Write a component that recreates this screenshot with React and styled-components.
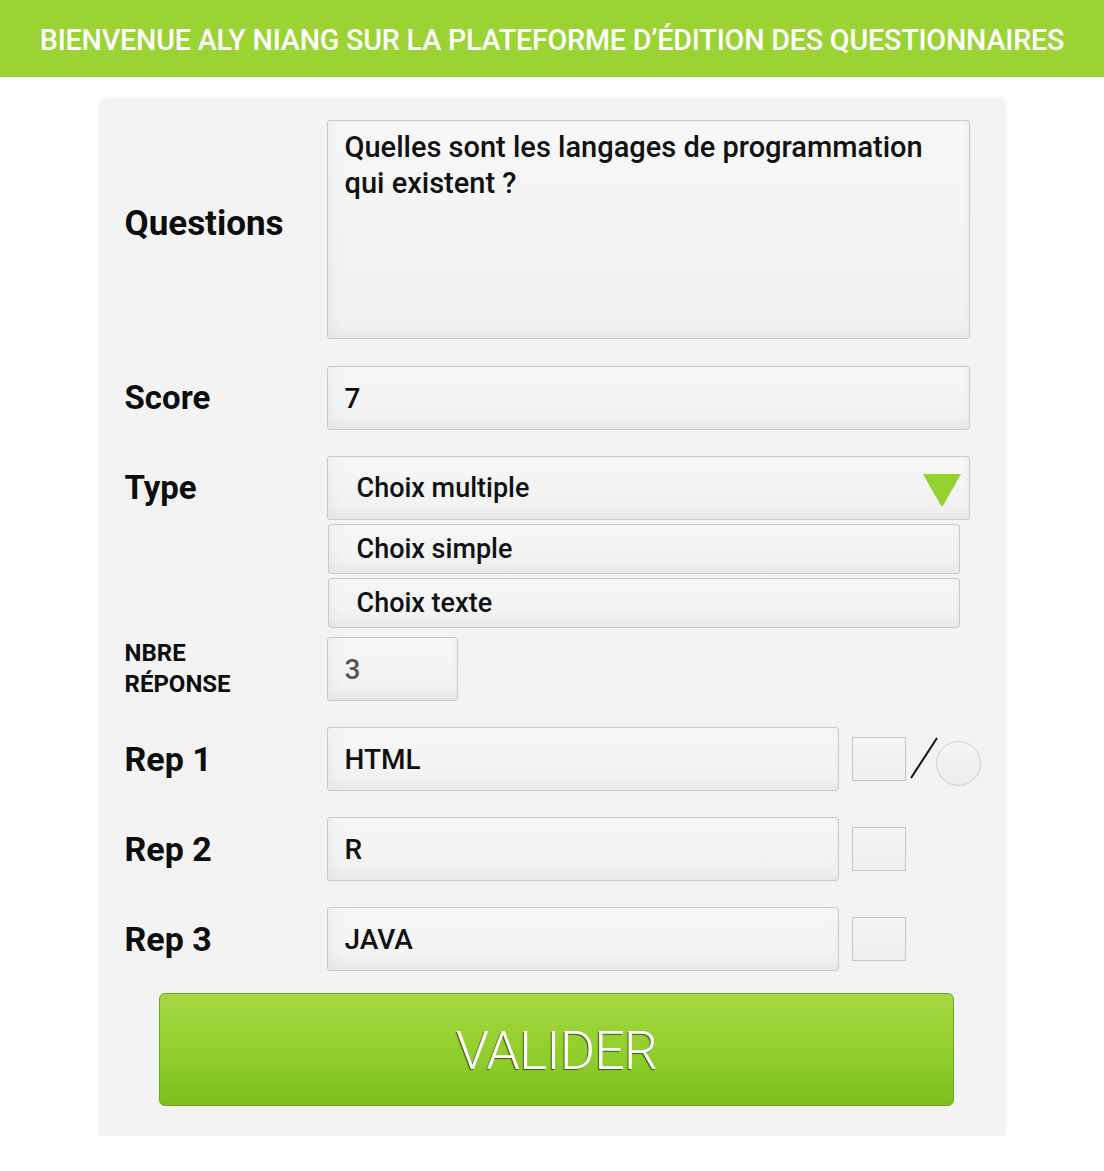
import React from 'react'
import styled, { createGlobalStyle } from 'styled-components'

const GlobalStyle = createGlobalStyle`
  body {
    margin: 0;
    background: #ffffff;
    font-family: Roboto, "Noto Sans", Arial, sans-serif;
    color: #111;
  }
`

const Header = styled.header`
  height: 77px;
  background: #9bd334;
  display: flex;
  align-items: center;
  justify-content: center;
`

const HeaderTitle = styled.h1`
  margin: 2px 0 0;
  color: #fff;
  font-size: 28.7px;
  font-weight: 500;
  letter-spacing: -0.2px;
  text-transform: uppercase;
`

const Card = styled.form`
  width: 903px;
  margin: 22px auto 0;
  box-sizing: border-box;
  background: #f3f3f3;
  border-radius: 4px;
  box-shadow: 0 1px 6px rgba(0, 0, 0, 0.12);
  padding: 21px 24px 30px;
  display: flex;
  flex-direction: column;
`

const Row = styled.div`
  display: grid;
  grid-template-columns: 202px 1fr;
  align-items: ${p => (p.$top ? 'start' : 'center')};
  margin-bottom: ${p => p.$gap ?? 26}px;
`

const Label = styled.label`
  font-size: ${p => (p.$small ? 24 : p.$size || 33)}px;
  font-weight: 700;
  line-height: ${p => (p.$small ? '31px' : '64px')};
  color: #0d0d0d;
  text-transform: ${p => (p.$small ? 'uppercase' : 'none')};
  margin-top: ${p => p.$shift || 0}px;
`

const Box = styled.div`
  box-sizing: border-box;
  width: ${p => p.$w || '643px'};
  height: ${p => p.$h || '64px'};
  border: 1px solid #c9c9c9;
  border-radius: 3px;
  background: linear-gradient(#f7f7f7, #f1f1f1);
  box-shadow: inset 0 -8px 12px rgba(0, 0, 0, 0.03), inset 8px 0 12px rgba(0, 0, 0, 0.02);
  padding: 0 17px;
  display: flex;
  align-items: center;
  font-size: 28px;
  font-weight: 500;
  color: ${p => p.$muted ? '#555' : '#111'};
`

const TextArea = styled(Box)`
  align-items: flex-start;
  padding-top: 8px;
  line-height: 36px;
  font-size: 29px;
`

const SelectWrap = styled.div`
  display: flex;
  flex-direction: column;
  gap: 4px;
`

const Select = styled(Box)`
  padding-left: 29px;
  justify-content: space-between;
  padding-right: 7px;
  font-size: 27px;
`

const Option = styled(Box)`
  width: 632px;
  height: 50px;
  margin-left: 1px;
  padding-left: 28px;
  font-size: 27px;
`

const Arrow = styled.svg`
  width: 40px;
  height: 34px;
  margin-top: 4px;
`

const RepLine = styled.div`
  display: flex;
  align-items: center;
`

const Check = styled.div`
  box-sizing: border-box;
  width: 54px;
  height: 44px;
  margin-left: 13px;
  border: 1px solid #c6c6c6;
  background: linear-gradient(#f5f5f5, #eeeeee);
`

const Slash = styled.svg`
  width: 30px;
  height: 46px;
  margin-left: 3px;
`

const Radio = styled.div`
  box-sizing: border-box;
  width: 45px;
  height: 45px;
  margin: 8px 0 0 -3px;
  border-radius: 50%;
  border: 1px solid #cfcfcf;
  background: linear-gradient(#f5f5f5, #ececec);
`

const Submit = styled.button`
  align-self: center;
  margin: 0 0 0 9px;
  width: 795px;
  height: 113px;
  border: 1px solid #6aa823;
  border-radius: 6px;
  background: linear-gradient(#a5d843, #93cf2c 50%, #7bc11e);
  color: #fff;
  font-family: Roboto, "Noto Sans", sans-serif;
  font-weight: 300;
  font-size: 54px;
  letter-spacing: -1px;
  text-shadow: -1px 1px 1px rgba(40, 70, 10, 0.85);
  padding-top: 2px;
`

const reps = [
  { n: 1, value: 'HTML', radio: true },
  { n: 2, value: 'R' },
  { n: 3, value: 'JAVA' },
]

function App() {
  return (
    <>
      <GlobalStyle />
      <Header>
        <HeaderTitle>Bienvenue Aly Niang sur la plateforme d’édition des questionnaires</HeaderTitle>
      </Header>
      <Card onSubmit={e => e.preventDefault()}>
        <Row $gap={27}>
          <Label $shift={-12} $size={35}>Questions</Label>
          <TextArea $h="219px">
            Quelles sont les langages de programmation
            <br />
            qui existent ?
          </TextArea>
        </Row>
        <Row $gap={26}>
          <Label>Score</Label>
          <Box>7</Box>
        </Row>
        <Row $top $gap={9}>
          <Label>Type</Label>
          <SelectWrap>
            <Select>
              Choix multiple
              <Arrow viewBox="0 0 40 34">
                <path d="M1 1 H39 L21.5 32 Q20 34 18.5 32 Z" fill="#95d22e" />
              </Arrow>
            </Select>
            <Option>Choix simple</Option>
            <Option>Choix texte</Option>
          </SelectWrap>
        </Row>
        <Row $gap={26}>
          <Label $small>NBRE<br />Réponse</Label>
          <Box $w="131px" $muted>3</Box>
        </Row>
        {reps.map(r => (
          <Row key={r.n} $gap={r.n === 3 ? 22 : 26}>
            <Label $size={34}>Rep {r.n}</Label>
            <RepLine>
              <Box $w="512px">{r.value}</Box>
              <Check />
              {r.radio && (
                <>
                  <Slash viewBox="0 0 30 46">
                    <line x1="2" y1="42" x2="28" y2="2" stroke="#111" strokeWidth="2" />
                  </Slash>
                  <Radio />
                </>
              )}
            </RepLine>
          </Row>
        ))}
        <Submit type="submit">VALIDER</Submit>
      </Card>
    </>
  )
}

export default App
